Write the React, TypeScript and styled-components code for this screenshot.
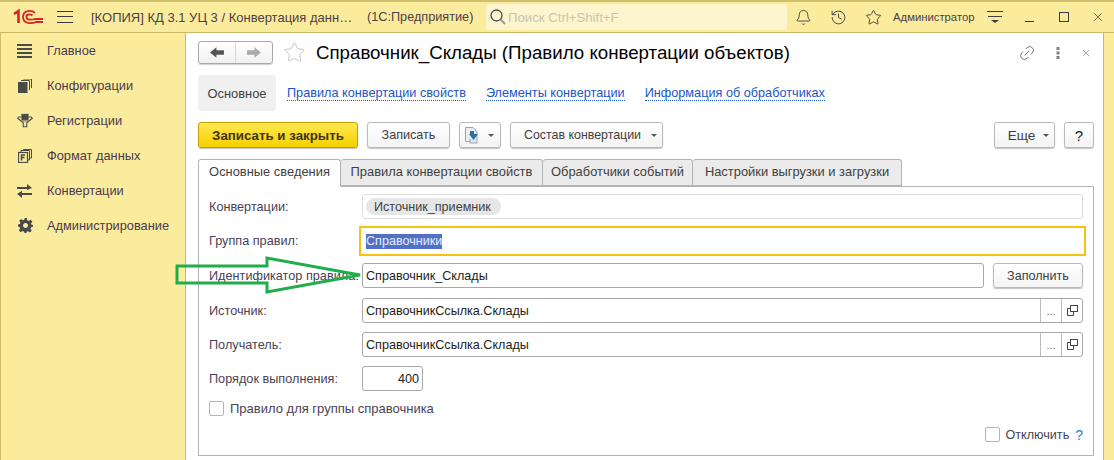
import { FC, ReactNode } from "react";
import styled, { createGlobalStyle } from "styled-components";
import { Bell, History, Link2, Star, X } from "lucide-react";

const GlobalStyle = createGlobalStyle`
  html, body {
    margin: 0;
    padding: 0;
    background: #fbec9d;
  }
  * {
    box-sizing: border-box;
  }
`;

const textColor = "#4b3f45";
const lineColor = "#b3b3b3";

const Page = styled.div`
  width: 1114px;
  height: 460px;
  overflow: hidden;
  position: relative;
  display: flex;
  flex-direction: column;
  background: #fbec9d;
  font-family: "Liberation Sans", Arial, sans-serif;
  font-size: 12px;
  color: ${textColor};
`;

const TitleBar = styled.header`
  height: 33px;
  flex: none;
  display: flex;
  align-items: center;
  border-top: 2px solid #d0bf6c;
  border-bottom: 1px solid #c9b766;
  padding-left: 13px;

  & > * {
    flex: none;
  }
`;

const MenuLines = styled.span`
  width: 16px;
  height: 12px;
  margin-left: 14px;
  border-top: 1px solid #3c3c3c;
  border-bottom: 1px solid #3c3c3c;
  position: relative;
  &::after {
    content: "";
    position: absolute;
    left: 0;
    right: 0;
    top: 4px;
    border-top: 1px solid #3c3c3c;
  }
`;

const WindowTitle = styled.span`
  margin-left: 18px;
  width: 276px;
  font-size: 13px;
  white-space: nowrap;
`;

const AppName = styled.span`
  width: 119px;
  font-size: 12.7px;
  white-space: nowrap;
`;

const SearchBox = styled.div`
  width: 301px;
  height: 26px;
  margin-right: 8px;
  border-radius: 3px;
  background: #fdf5cd;
  display: flex;
  align-items: center;
  gap: 1px;
  padding-left: 3px;
  font-size: 13.2px;
  color: #c9c5ae;
`;

const HeaderIcons = styled.div`
  display: flex;
  align-items: center;
  gap: 18px;
  color: #3f3f3f;
`;

const UserName = styled.span`
  margin-left: 11px;
  width: 94px;
  font-size: 11.3px;
`;

const WindowControls = styled.div`
  display: grid;
  grid-template-columns: repeat(3, 34px);
  justify-items: center;
  align-items: center;
  margin-left: 10px;
  color: #3a3a3a;
`;

const Body = styled.div`
  flex: 1;
  min-height: 0;
  display: flex;
  border-left: 1px solid #d0bf6c;
`;

const Sidebar = styled.nav`
  width: 185px;
  flex: none;
  border-right: 1px solid #c9b766;
`;

const SideItem = styled.div`
  height: 35px;
  display: flex;
  align-items: center;
  padding-left: 16px;
  gap: 14px;
  font-size: 12.8px;
  color: #4a3a4c;
`;

const SideIconBox = styled.span`
  width: 16px;
  height: 16px;
  display: flex;
  align-items: center;
  justify-content: center;
  color: #4a4a4a;
`;

const Main = styled.main`
  width: 918px;
  flex: none;
  background: #fff;
  border-right: 1px solid #c9b766;
  padding: 7px 9px 0 12px;
  display: flex;
  flex-direction: column;
`;

const FormHeader = styled.div`
  height: 25px;
  display: flex;
  align-items: center;
`;

const NavGroup = styled.div`
  width: 75px;
  height: 23px;
  border: 1px solid #a9a9a9;
  border-radius: 3px;
  display: flex;
  background: linear-gradient(#ffffff, #f1f1f1);
  box-shadow: 0 1px 1px #cfcfcf;
`;

const NavPart = styled.span<{ $divided?: boolean }>`
  flex: 1;
  display: flex;
  align-items: center;
  justify-content: center;
  border-left: ${({ $divided }) => ($divided ? "1px solid #d8d8d8" : "none")};
`;

const FavStar = styled(Star)`
  margin-left: 10px;
  color: #bcbcbc;
`;

const FormTitle = styled.h1`
  margin: 0 0 0 10px;
  font-size: 18.7px;
  font-weight: 400;
  color: #000;
  white-space: nowrap;
  flex: 1;
`;

const FormActions = styled.div`
  display: flex;
  align-items: center;
  gap: 20px;
  padding-right: 2px;
  color: #707070;
`;

const TiltedLink = styled(Link2)`
  transform: rotate(-45deg);
`;

const LinkBar = styled.div`
  height: 36px;
  margin-top: 10px;
  display: flex;
  align-items: stretch;
  gap: 20px;
`;

const ActivePage = styled.span`
  width: 78px;
  margin-right: -9px;
  background: #f0f0f0;
  border-radius: 3px;
  display: flex;
  align-items: center;
  justify-content: center;
  font-size: 12.9px;
  color: #3f3f3f;
`;

const PageLink = styled.a`
  align-self: center;
  margin-top: 1px;
  font-size: 12.7px;
  color: #1a56c4;
  border-bottom: 1px dotted #1a56c4;
  line-height: 13px;
`;

const CommandBar = styled.div`
  margin-top: 11px;
  height: 26px;
  display: flex;
  align-items: stretch;
  gap: 9px;
`;

const Button = styled.button<{ $width: number; $primary?: boolean }>`
  width: ${({ $width }) => $width}px;
  padding: 0;
  border: 1px solid ${({ $primary }) => ($primary ? "#c4a100" : "#b9b9b9")};
  border-radius: 3px;
  background: ${({ $primary }) =>
    $primary
      ? "linear-gradient(#ffe94f, #f5d000)"
      : "linear-gradient(#ffffff, #f3f3f3)"};
  box-shadow: 0 1px 1px #c4c4c4;
  font-family: inherit;
  font-size: ${({ $primary }) => ($primary ? "13.3px" : "12.6px")};
  font-weight: ${({ $primary }) => ($primary ? 700 : 400)};
  color: ${({ $primary }) => ($primary ? "#3f3414" : "#3f3f3f")};
  display: flex;
  align-items: center;
  justify-content: center;
  gap: 8px;
`;

const FillButton = styled(Button)`
  height: 25px;
  margin-left: 9px;
  flex: none;
`;

const CopyButton = styled(Button)`
  gap: 5px;
  padding-right: 2px;
`;

const ComposeButton = styled(Button)`
  padding-left: 8px;
  gap: 10px;
  font-size: 12.4px;
`;

const MoreButton = styled(Button)`
  padding-left: 8px;
  font-size: 13.6px;
`;

const HelpButton = styled(Button)`
  font-size: 15px;
  color: #222;
`;

const Spacer = styled.span`
  flex: 1;
`;

const Caret = styled.span`
  width: 0;
  height: 0;
  margin-top: 1px;
  border-left: 3px solid transparent;
  border-right: 3px solid transparent;
  border-top: 3px solid #555;
`;

const TabRow = styled.div`
  margin-top: 11px;
  height: 27px;
  display: flex;
  position: relative;
  z-index: 1;
`;

const Tab = styled.div<{ $width: number; $active?: boolean }>`
  width: ${({ $width }) => $width}px;
  height: ${({ $active }) => ($active ? "28px" : "27px")};
  padding-bottom: ${({ $active }) => ($active ? "3px" : "2px")};
  display: flex;
  align-items: center;
  justify-content: center;
  font-size: 12.9px;
  white-space: nowrap;
  border: 1px solid ${lineColor};
  border-left-width: ${({ $active }) => ($active ? "1px" : "0")};
  border-bottom-color: ${({ $active }) => ($active ? "#fff" : lineColor)};
  border-radius: 3px 3px 0 0;
  background: ${({ $active }) => ($active ? "#fff" : "#ebebeb")};
  color: #3f3f3f;
`;

const TabPanel = styled.section`
  height: 270px;
  border: 1px solid ${lineColor};
  padding: 7px 10px 0 10px;
  display: flex;
  flex-direction: column;
  position: relative;
`;

const FormRow = styled.div<{ $top: number; $height?: number; $end?: boolean }>`
  margin-top: ${({ $top }) => $top}px;
  height: ${({ $height }) => $height ?? 25}px;
  display: flex;
  align-items: center;
  justify-content: ${({ $end }) => ($end ? "flex-end" : "flex-start")};
  flex: none;
`;

const FieldLabel = styled.label`
  width: 153px;
  flex: none;
  font-size: 12.7px;
  color: #4a3f55;
  white-space: nowrap;
`;

const Field = styled.div<{ $width?: number; $soft?: boolean; $right?: boolean }>`
  flex: ${({ $width }) => ($width ? "none" : "1")};
  width: ${({ $width }) => ($width ? `${$width}px` : "auto")};
  height: 100%;
  border: 1px solid ${({ $soft }) => ($soft ? "#dedede" : "#a8a8a8")};
  border-radius: 3px;
  background: #fff;
  display: flex;
  align-items: center;
  justify-content: ${({ $right }) => ($right ? "flex-end" : "flex-start")};
  padding: 0 ${({ $right }) => ($right ? "3px" : "0")} 0 3px;
  font-size: 12.6px;
  color: #1c1c1c;
`;

const FocusField = styled.div`
  flex: 1;
  height: 100%;
  margin: 0 -3px;
  border: 2px solid #f5c211;
  display: flex;
  align-items: center;
  padding-left: 5px;
  font-size: 12.6px;
`;

const Selected = styled.span`
  background: #5470c6;
  color: #e6ecff;
  line-height: 15px;
`;

const Chip = styled.span`
  height: 17px;
  padding: 0 10px 0 8px;
  border-radius: 9px;
  background: #e6e6e6;
  display: flex;
  align-items: center;
  color: #3f3f3f;
`;

const FieldValue = styled.span`
  flex: 1;
`;

const FieldButton = styled.span`
  width: 21px;
  height: 100%;
  border-left: 1px solid #bcbcbc;
  display: flex;
  align-items: center;
  justify-content: center;
  color: #666;
  font-size: 11px;
`;

const CheckRow = styled.div<{ $tight?: boolean }>`
  display: flex;
  align-items: center;
  gap: 6px;
  font-size: ${({ $tight }) => ($tight ? "12.6px" : "13px")};
  color: #4a3f55;
`;

const Checkbox = styled.span`
  width: 15px;
  height: 15px;
  border: 1px solid #b5b5b5;
  border-radius: 2px;
  background: #fff;
`;

const HelpMark = styled.span`
  color: #1f7fc4;
  font-size: 14px;
`;

const ArrowOverlay = styled.svg`
  position: absolute;
  left: 174px;
  top: 256px;
`;

const Logo1C: FC = () => (
  <svg width="30" height="16" viewBox="0 0 30 16" fill="none" stroke="#d8232a">
    <path d="M1 5 L5.5 2 V14" strokeWidth="2.6" />
    <path d="M22 4 C19 0.8 10 0.8 10 8 C10 15 19 15 23 13 H30" strokeWidth="1.8" />
    <path d="M19.5 6.5 C17.5 4.8 13.4 5 13.4 8 C13.4 11 18 11.2 22 10 H30" strokeWidth="1.8" />
  </svg>
);

const LinesIcon: FC = () => (
  <svg width="16" height="14" viewBox="0 0 16 14" fill="#4a4a4a">
    <rect y="0" width="15" height="2" />
    <rect y="4" width="15" height="2" />
    <rect y="8" width="15" height="2" />
    <rect y="12" width="15" height="2" />
  </svg>
);

const ConfigIcon: FC = () => (
  <svg width="14" height="14" viewBox="0 0 14 14" fill="none">
    <rect x="0" y="3" width="9.5" height="11" fill="#4a4a4a" />
    <path d="M3 1.5 H11.5 V11 M5.5 0 H13.5 V9" stroke="#4a4a4a" strokeWidth="1" />
  </svg>
);

const FunnelIcon: FC = () => (
  <svg width="18" height="15" viewBox="0 0 18 15" fill="none" stroke="#4a4a4a">
    <rect x="5.5" y="0.5" width="7" height="6" fill="#4a4a4a" />
    <path d="M5 3.5 H2 L0.8 5 L7 10 V14.5 H11 V10 L17.2 5 L16 3.5 H13" strokeWidth="1.2" />
    <path d="M5 8 H13" stroke="#4a4a4a" />
  </svg>
);

const FormatIcon: FC = () => (
  <svg width="14" height="14" viewBox="0 0 14 14" fill="none" stroke="#4a4a4a">
    <rect x="0.5" y="3.5" width="9" height="10" strokeWidth="1.2" />
    <path d="M3 3 V1.5 H11.5 V11 H10 M5.5 1 V0.5 H13.5 V9 H12" strokeWidth="1" />
    <path d="M3.5 11.5 V6 H7 M3.5 8.5 H6.5" strokeWidth="1.5" />
  </svg>
);

const SwapIcon: FC = () => (
  <svg width="16" height="14" viewBox="0 0 16 14" fill="#4a4a4a">
    <path d="M0 3 H10 V0 L15 4 L10 6 V5 H0 Z" />
    <path d="M15 9 H5 V6.8 L0 10 L5 14 V11 H15 Z" />
  </svg>
);

const GearIcon: FC = () => (
  <svg width="15" height="15" viewBox="0 0 24 24" fill="#4a4a4a">
    <path
      fillRule="evenodd"
      d="M14 0 L14.8 3.6 L17 4.6 L20.3 2.6 L23 5.5 L20.8 8.6 L21.6 10.7 L24 11 V14 L21 14.8 L20 17 L22 20.3 L19 23 L16 21 L14 21.7 L13.5 24 H10.5 L9.5 21.5 L7.3 20.6 L4 22.6 L1.4 19.6 L3.4 16.6 L2.6 14.4 L0 13.5 V10.5 L3 9.6 L3.8 7.5 L2 4.2 L4.8 1.6 L8 3.6 L10 2.8 L10.8 0 Z M12 8 A4 4 0 1 0 12.01 8 Z"
    />
  </svg>
);

const SearchIcon: FC = () => (
  <svg width="18" height="18" viewBox="0 0 18 18" fill="none">
    <circle cx="7.5" cy="7.5" r="5.5" stroke="#4d4d4d" strokeWidth="1.3" />
    <path d="M11.5 11.5 L16 16" stroke="#9a9a9a" strokeWidth="2" />
  </svg>
);

const ServiceMenuIcon: FC = () => (
  <svg width="16" height="14" viewBox="0 0 16 14" fill="#3f3f3f">
    <rect y="1" width="16" height="1" />
    <rect x="1" y="6" width="14" height="1" />
    <path d="M4 10 H12 L8 13 Z" />
  </svg>
);

const NavArrow: FC<{ dir: "left" | "right"; color: string }> = ({ dir, color }) => (
  <svg width="15" height="11" viewBox="0 0 14 10" fill={color}>
    {dir === "left" ? (
      <path d="M0 5 L6 0 V3 H13 V7 H6 V10 Z" />
    ) : (
      <path d="M13 5 L7 0 V3 H0 V7 H7 V10 Z" />
    )}
  </svg>
);

const DotsIcon: FC = () => (
  <svg width="4" height="14" viewBox="0 0 4 14" fill="#808080">
    <rect x="0.5" y="1" width="3" height="3" />
    <rect x="0.5" y="5.5" width="3" height="3" />
    <rect x="0.5" y="10" width="3" height="3" />
  </svg>
);

const OpenIcon: FC = () => (
  <svg width="11" height="11" viewBox="0 0 11 11" fill="none" stroke="#444">
    <rect x="3.5" y="0.5" width="7" height="6" />
    <path d="M3 3.5 H0.5 V10.5 H6.5 V7" />
  </svg>
);

const CopyDocIcon: FC = () => (
  <svg width="19" height="18" viewBox="0 0 19 18">
    <path d="M1.5 1.5 H9 L12 4.5 V15.5 H1.5 Z" fill="#e9eef5" stroke="#9aa4b0" />
    <path d="M11 4 L13 6 V17 H6 V13" fill="#dfe6ee" stroke="#9aa4b0" />
    <path d="M6 5 H10 V8 H14 L9.5 14 L5 8 H6 Z" fill="#2a6f9e" />
  </svg>
);

const RefField: FC<{ value: string }> = ({ value }) => (
  <Field>
    <FieldValue>{value}</FieldValue>
    <FieldButton>...</FieldButton>
    <FieldButton>
      <OpenIcon />
    </FieldButton>
  </Field>
);

const sideItems: { title: string; icon: ReactNode }[] = [
  { title: "Главное", icon: <LinesIcon /> },
  { title: "Конфигурации", icon: <ConfigIcon /> },
  { title: "Регистрации", icon: <FunnelIcon /> },
  { title: "Формат данных", icon: <FormatIcon /> },
  { title: "Конвертации", icon: <SwapIcon /> },
  { title: "Администрирование", icon: <GearIcon /> },
];

const App: FC = () => (
  <Page>
    <GlobalStyle />
    <TitleBar>
      <Logo1C />
      <MenuLines />
      <WindowTitle>[КОПИЯ] КД 3.1 УЦ 3 / Конвертация данн…</WindowTitle>
      <AppName>(1С:Предприятие)</AppName>
      <SearchBox>
        <SearchIcon />
        Поиск Ctrl+Shift+F
      </SearchBox>
      <HeaderIcons>
        <Bell size={17} strokeWidth={1.3} />
        <History size={17} strokeWidth={1.3} />
        <Star size={17} strokeWidth={1.3} />
      </HeaderIcons>
      <UserName>Администратор</UserName>
      <ServiceMenuIcon />
      <WindowControls>
        <svg width="10" height="10" viewBox="0 0 10 10" stroke="#3a3a3a">
          <path d="M0 9.5 H9" />
        </svg>
        <svg width="10" height="10" viewBox="0 0 10 10" fill="none" stroke="#3a3a3a">
          <rect x="0.5" y="0.5" width="9" height="9" />
        </svg>
        <X size={14} strokeWidth={1.2} />
      </WindowControls>
    </TitleBar>
    <Body>
      <Sidebar>
        {sideItems.map((item) => (
          <SideItem key={item.title}>
            <SideIconBox>{item.icon}</SideIconBox>
            {item.title}
          </SideItem>
        ))}
      </Sidebar>
      <Main>
        <FormHeader>
          <NavGroup>
            <NavPart>
              <NavArrow dir="left" color="#555" />
            </NavPart>
            <NavPart $divided>
              <NavArrow dir="right" color="#aaa" />
            </NavPart>
          </NavGroup>
          <FavStar size={23} strokeWidth={0.9} />
          <FormTitle>Справочник_Склады (Правило конвертации объектов)</FormTitle>
          <FormActions>
            <TiltedLink size={18} strokeWidth={1.2} />
            <DotsIcon />
            <X size={12} strokeWidth={1.2} />
          </FormActions>
        </FormHeader>
        <LinkBar>
          <ActivePage>Основное</ActivePage>
          <PageLink>Правила конвертации свойств</PageLink>
          <PageLink>Элементы конвертации</PageLink>
          <PageLink>Информация об обработчиках</PageLink>
        </LinkBar>
        <CommandBar>
          <Button $primary $width={160}>
            Записать и закрыть
          </Button>
          <Button $width={83}>Записать</Button>
          <CopyButton $width={42}>
            <CopyDocIcon />
            <Caret />
          </CopyButton>
          <ComposeButton $width={153}>
            Состав конвертации
            <Caret />
          </ComposeButton>
          <Spacer />
          <MoreButton $width={61}>
            Еще
            <Caret />
          </MoreButton>
          <HelpButton $width={30}>?</HelpButton>
        </CommandBar>
        <TabRow>
          <Tab $active $width={143}>
            Основные сведения
          </Tab>
          <Tab $width={202}>Правила конвертации свойств</Tab>
          <Tab $width={150}>Обработчики событий</Tab>
          <Tab $width={209}>Настройки выгрузки и загрузки</Tab>
        </TabRow>
        <TabPanel>
          <FormRow $top={0}>
            <FieldLabel>Конвертации:</FieldLabel>
            <Field $soft>
              <Chip>Источник_приемник</Chip>
            </Field>
          </FormRow>
          <FormRow $top={7} $height={30}>
            <FieldLabel>Группа правил:</FieldLabel>
            <FocusField>
              <Selected>Справочники</Selected>
            </FocusField>
          </FormRow>
          <FormRow $top={7}>
            <FieldLabel>Идентификатор правила:</FieldLabel>
            <Field>Справочник_Склады</Field>
            <FillButton $width={90}>Заполнить</FillButton>
          </FormRow>
          <FormRow $top={10}>
            <FieldLabel>Источник:</FieldLabel>
            <RefField value="СправочникСсылка.Склады" />
          </FormRow>
          <FormRow $top={9}>
            <FieldLabel>Получатель:</FieldLabel>
            <RefField value="СправочникСсылка.Склады" />
          </FormRow>
          <FormRow $top={9}>
            <FieldLabel>Порядок выполнения:</FieldLabel>
            <Field $width={61} $right>
              400
            </Field>
          </FormRow>
          <FormRow $top={5}>
            <CheckRow>
              <Checkbox />
              Правило для группы справочника
            </CheckRow>
          </FormRow>
          <FormRow $top={1} $end>
            <CheckRow $tight>
              <Checkbox />
              Отключить
              <HelpMark>?</HelpMark>
            </CheckRow>
          </FormRow>
        </TabPanel>
      </Main>
    </Body>
    <ArrowOverlay width="190" height="40" viewBox="0 0 190 40" fill="none">
      <path
        d="M3 10 H93 V2 L186 19 L93 36 V27 H3 Z"
        stroke="#22ad4d"
        strokeWidth="3"
      />
    </ArrowOverlay>
  </Page>
);

export default App;
